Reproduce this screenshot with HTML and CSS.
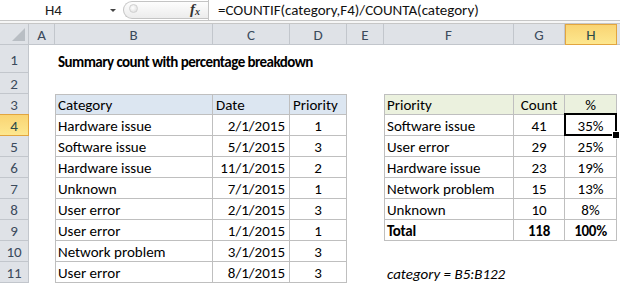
FILE: index.html
```html
<!DOCTYPE html>
<html>
<head>
<meta charset="utf-8">
<link rel="stylesheet" href="styles.css">
</head>
<body>
<div class="fbar">
  <div class="namebox"><span class="ref">H4</span><span class="arrow"></span></div>
  <div class="fxzone"><span class="knob"></span><span class="fx"><i>f</i><sub>x</sub></span></div>
  <div class="formula">=COUNTIF(category,F4)/COUNTA(category)</div>
</div>
<div class="gap"></div>
<div class="sheet">
  <div class="corner"><span class="tri"></span></div>
  <div class="hd">A</div><div class="hd">B</div><div class="hd">C</div><div class="hd">D</div><div class="hd">E</div><div class="hd">F</div><div class="hd">G</div><div class="hd sel">H</div><div class="hd"></div>

  <div class="rh">1</div><div class="c"></div><div class="c title">Summary count with percentage breakdown</div><div class="c"></div><div class="c"></div><div class="c"></div><div class="c"></div><div class="c"></div><div class="c"></div><div class="c"></div>

  <div class="rh">2</div><div class="c"></div><div class="c"></div><div class="c"></div><div class="c"></div><div class="c"></div><div class="c"></div><div class="c"></div><div class="c"></div><div class="c"></div>

  <div class="rh">3</div><div class="c"></div><div class="c t first top blue">Category</div><div class="c t top blue">Date</div><div class="c t top blue">Priority</div><div class="c"></div><div class="c t first top green">Priority</div><div class="c t top green m">Count</div><div class="c t top green m">%</div><div class="c"></div>

  <div class="rh sel">4</div><div class="c"></div><div class="c t first">Hardware issue</div><div class="c t r">2/1/2015</div><div class="c t m">1</div><div class="c"></div><div class="c t first">Software issue</div><div class="c t m">41</div><div class="c t m active">35%</div><div class="c"></div>

  <div class="rh">5</div><div class="c"></div><div class="c t first">Software issue</div><div class="c t r">5/1/2015</div><div class="c t m">3</div><div class="c"></div><div class="c t first">User error</div><div class="c t m">29</div><div class="c t m">25%</div><div class="c"></div>

  <div class="rh">6</div><div class="c"></div><div class="c t first">Hardware issue</div><div class="c t r">11/1/2015</div><div class="c t m">2</div><div class="c"></div><div class="c t first">Hardware issue</div><div class="c t m">23</div><div class="c t m">19%</div><div class="c"></div>

  <div class="rh">7</div><div class="c"></div><div class="c t first">Unknown</div><div class="c t r">7/1/2015</div><div class="c t m">1</div><div class="c"></div><div class="c t first">Network problem</div><div class="c t m">15</div><div class="c t m">13%</div><div class="c"></div>

  <div class="rh">8</div><div class="c"></div><div class="c t first">User error</div><div class="c t r">2/1/2015</div><div class="c t m">3</div><div class="c"></div><div class="c t first">Unknown</div><div class="c t m">10</div><div class="c t m">8%</div><div class="c"></div>

  <div class="rh">9</div><div class="c"></div><div class="c t first">User error</div><div class="c t r">1/1/2015</div><div class="c t m">1</div><div class="c"></div><div class="c t first b">Total</div><div class="c t m b">118</div><div class="c t m b">100%</div><div class="c"></div>

  <div class="rh">10</div><div class="c"></div><div class="c t first">Network problem</div><div class="c t r">3/1/2015</div><div class="c t m">3</div><div class="c"></div><div class="c"></div><div class="c"></div><div class="c"></div><div class="c"></div>

  <div class="rh">11</div><div class="c"></div><div class="c t first">User error</div><div class="c t r">8/1/2015</div><div class="c t m">3</div><div class="c"></div><div class="c note">category = B5:B122</div><div class="c"></div><div class="c"></div><div class="c"></div>
</div>
</body>
</html>
```

FILE: styles.css
```css
* { box-sizing: border-box; }
html, body { margin: 0; padding: 0; background: #fff; }
body {
  width: 620px;
  height: 284px;
  overflow: hidden;
  font-family: Carlito, Lato, "Liberation Sans", sans-serif;
  font-size: 15px;
  color: #000;
}

.fbar {
  display: flex;
  height: 21px;
  border-bottom: 1px solid #c6c6c6;
  background: #fff;
}
.namebox {
  width: 123px;
  position: relative;
  display: flex;
  align-items: center;
}
.ref {
  position: absolute;
  left: 45px;
  top: 1px;
  color: #1d1d1d;
}
.arrow {
  position: absolute;
  left: 110px;
  top: 9px;
  width: 0; height: 0;
  border-left: 3px solid transparent;
  border-right: 3px solid transparent;
  border-top: 3px solid #444;
}
.fxzone {
  width: 85px;
  margin-top: 1px;
  height: 18px;
  border: 1px solid #c4c4c4;
  border-right: none;
  border-radius: 9px 0 0 9px;
  background: linear-gradient(#fdfdfd, #ececec);
  position: relative;
}
.knob {
  position: absolute;
  left: 5px; top: 2px;
  width: 9px; height: 9px;
  border-radius: 50%;
  background: radial-gradient(circle at 40% 40%, #fff, #d8d8d8);
  border: 1px solid #d0d0d0;
}
.fx {
  position: absolute;
  left: 66px; top: -1px;
  font-family: "Liberation Serif", serif;
  font-weight: bold;
  color: #333;
  font-size: 15px;
}
.fx sub { font-size: 10px; font-style: italic; vertical-align: -1px; }
.formula {
  flex: 1;
  border-left: 1px solid #c4c4c4;
  padding-left: 9px;
  line-height: 20px;
  color: #111;
  white-space: nowrap;
}
.gap {
  height: 3px;
  background: #f6f6f6;
  border-bottom: 1px solid #c6c6c6;
}

.sheet {
  display: grid;
  grid-template-columns: 29px 26px 158px 77px 57px 37px 130px 51px 52px 1fr;
  grid-template-rows: 21px 28px repeat(10, 21px);
}
.corner, .hd, .rh {
  background: #dfe2e7;
  border-right: 1px solid #c2c6cc;
  border-bottom: 1px solid #c2c6cc;
  color: #3b4a5c;
  display: flex;
  align-items: center;
  justify-content: center;
}
.corner { position: relative; }
.tri {
  position: absolute;
  right: 3px; bottom: 3px;
  width: 0; height: 0;
  border-left: 13px solid transparent;
  border-bottom: 13px solid #b9bec4;
}
.hd { padding-top: 1px; }
.rh { padding-top: 2px; }
.hd.sel {
  background: linear-gradient(#f9d473, #fde78f);
  border: 1px solid #e2a53f;
  color: #2b4a4a;
}
.rh.sel {
  background: linear-gradient(#f9d473, #fde78f);
  border-right: 1px solid #e2a53f;
  border-bottom: 1px solid #e2a53f;
  border-top: 1px solid #e2a53f;
  margin-top: -1px;
  color: #2b4a4a;
}

.c {
  display: flex;
  align-items: flex-end;
  padding: 0 3px 0 3px;
  white-space: nowrap;
  overflow: visible;
}
.title { font-weight: bold; padding-bottom: 2px; letter-spacing: -0.55px; }
.t {
  border-right: 1px solid #bfbfbf;
  border-bottom: 1px solid #bfbfbf;
}
.first { border-left: 1px solid #bfbfbf; padding-left: 2px; }
.top { border-top: 1px solid #bfbfbf; }
.blue { background: #dce6f1; }
.green { background: #ebf1de; }
.r { justify-content: flex-end; padding-right: 4px; }
.m { justify-content: center; }
.b { font-weight: bold; letter-spacing: -0.3px; }
.note { font-style: italic; }

.active { position: relative; }
.active::after {
  content: "";
  position: absolute;
  left: -1px; top: -2px; right: -1px; bottom: -1px;
  border: 2px solid #000;
}
.active::before {
  content: "";
  position: absolute;
  right: -4px; bottom: -4px;
  width: 6px; height: 6px;
  background: #000;
  border: 1px solid #fff;
  z-index: 2;
}
```
